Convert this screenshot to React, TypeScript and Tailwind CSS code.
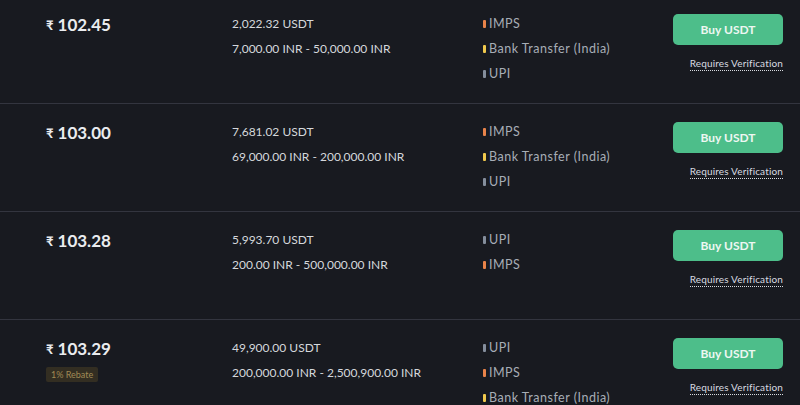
type Method = { name: string; color: string };

type Offer = {
  price: string;
  available: string;
  limit: string;
  methods: Method[];
  rebate?: string;
};

const IMPS: Method = { name: "IMPS", color: "bg-[#e8834a]" };
const BANK: Method = { name: "Bank Transfer (India)", color: "bg-[#f0c94d]" };
const UPI: Method = { name: "UPI", color: "bg-[#848e9c]" };

const offers: Offer[] = [
  {
    price: "102.45",
    available: "2,022.32 USDT",
    limit: "7,000.00 INR - 50,000.00 INR",
    methods: [IMPS, BANK, UPI],
  },
  {
    price: "103.00",
    available: "7,681.02 USDT",
    limit: "69,000.00 INR - 200,000.00 INR",
    methods: [IMPS, BANK, UPI],
  },
  {
    price: "103.28",
    available: "5,993.70 USDT",
    limit: "200.00 INR - 500,000.00 INR",
    methods: [UPI, IMPS],
  },
  {
    price: "103.29",
    available: "49,900.00 USDT",
    limit: "200,000.00 INR - 2,500,900.00 INR",
    methods: [UPI, IMPS, BANK],
    rebate: "1% Rebate",
  },
];

function OfferRow({ offer }: { offer: Offer }) {
  return (
    <div className="flex h-[108px] border-b border-[#33353f] pl-[46px] pr-[17px]">
      <div className="w-[186px] pt-[18px]">
        <div className="flex items-center leading-[22px] text-[#eaecef]">
          <span className="mr-[4px] text-[13px] font-bold">₹</span>
          <span className="text-[17px] font-bold">{offer.price}</span>
        </div>
        {offer.rebate && (
          <div className="mt-[6px] inline-block rounded-[2px] bg-[#332e22] px-[5px] text-[9px] leading-[15px] text-[#a08a55]">
            {offer.rebate}
          </div>
        )}
      </div>

      <div className="w-[251px] pt-[15px] text-[12px] leading-[25px] text-[#d5d8dc]">
        <div>{offer.available}</div>
        <div>{offer.limit}</div>
      </div>

      <div className="flex-1 pt-[15px] text-[12.5px] leading-[25px] tracking-[0.5px] text-[#a7adb6]">
        {offer.methods.map((m) => (
          <div key={m.name} className="flex items-center">
            <span className={`mr-[3px] h-[8px] w-[3px] rounded-[1px] ${m.color}`} />
            <span>{m.name}</span>
          </div>
        ))}
      </div>

      <div className="flex w-[110px] flex-col items-end pt-[18px]">
        <button className="h-[31px] w-[110px] rounded-[5px] bg-[#4dbe8a] text-[12px] font-bold text-[#eef7f2]">
          Buy USDT
        </button>
        <span className="mt-[11px] border-b border-dotted border-[#d8dbe0] text-[10px] leading-[14px] tracking-[0.15px] text-[#d8dbe0]">
          Requires Verification
        </span>
      </div>
    </div>
  );
}

export default function App() {
  return (
    <div
      className="h-[405px] w-[800px] overflow-hidden bg-[#181a20]"
      style={{ fontFamily: "Lato, 'Noto Sans', sans-serif" }}
    >
      <div className="-mt-[4px]">
        {offers.map((o) => (
          <OfferRow key={o.price} offer={o} />
        ))}
      </div>
    </div>
  );
}
